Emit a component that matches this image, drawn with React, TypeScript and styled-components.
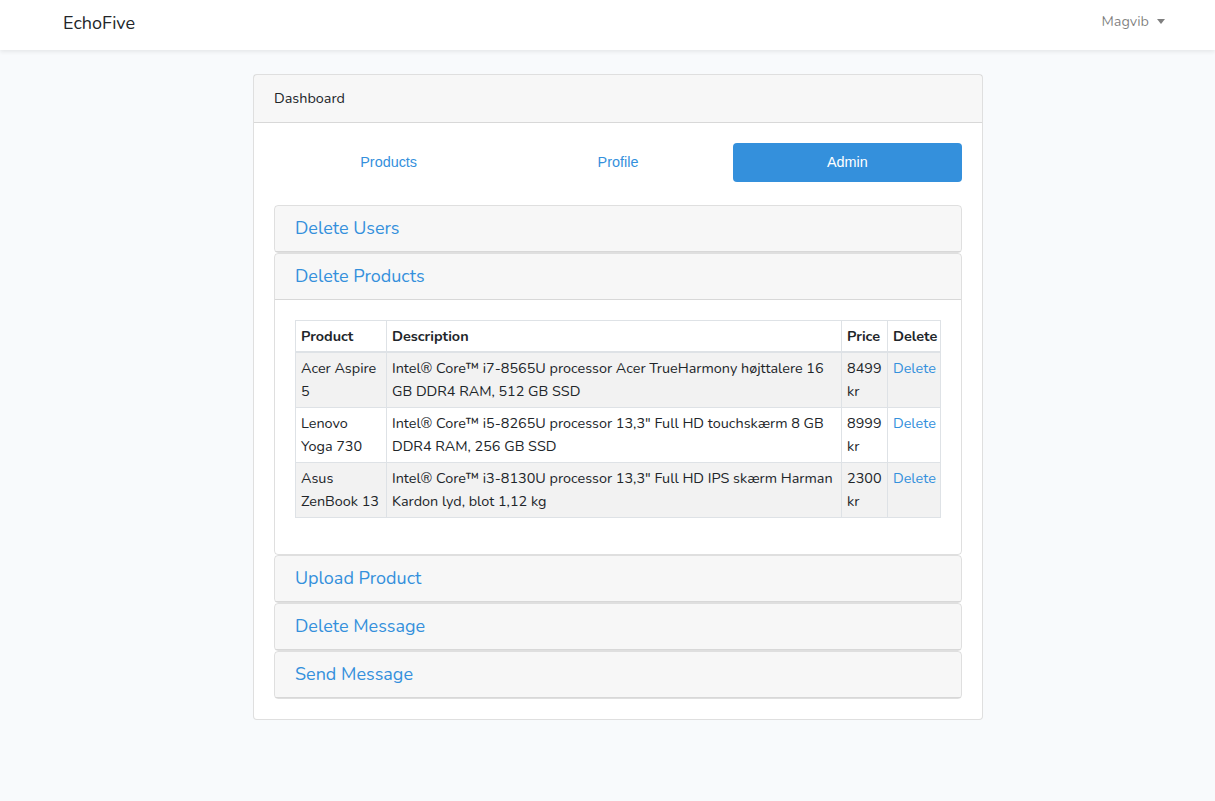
import React from "react";
import styled, { createGlobalStyle } from "styled-components";

const Global = createGlobalStyle`
  html, body { margin: 0; padding: 0; }
  body {
    background: #f8fafc;
    font-family: "Nunito", "Lato", "Noto Sans", sans-serif;
    font-size: 14.4px;
    line-height: 1.6;
    color: #212529;
  }
  * { box-sizing: border-box; }
`;

const NavBar = styled.nav`
  height: 50px;
  background: #fff;
  box-shadow: 0 2px 4px rgba(0, 0, 0, 0.075);
  display: flex;
  align-items: center;
  justify-content: space-between;
  padding: 0 50px 0 63px;
`;

const Brand = styled.a`
  font-size: 18px;
  color: #212529;
  text-decoration: none;
  margin-top: -4px;
`;

const UserMenu = styled.a`
  display: flex;
  align-items: center;
  gap: 8px;
  color: rgba(0, 0, 0, 0.5);
  font-size: 14.4px;
  margin-top: -7px;
  &::after {
    content: "";
    border-top: 5px solid rgba(0, 0, 0, 0.5);
    border-left: 4.5px solid transparent;
    border-right: 4.5px solid transparent;
    margin-top: 1px;
  }
`;

const Main = styled.main`
  display: flex;
  justify-content: center;
  padding: 24px 0 24px 21px;
`;

const Card = styled.div`
  width: 730px;
  background: #fff;
  border: 1px solid rgba(0, 0, 0, 0.125);
  border-radius: 4px;
`;

const CardHeader = styled.div`
  padding: 12px 20px;
  line-height: 23px;
  background: rgba(0, 0, 0, 0.03);
  border-bottom: 1px solid rgba(0, 0, 0, 0.125);
`;

const CardBody = styled.div`
  padding: 20px;
`;

const Pills = styled.div`
  display: grid;
  grid-template-columns: repeat(3, 1fr);
  margin-bottom: 23px;
`;

const Pill = styled.a<{ $active?: boolean }>`
  display: block;
  text-align: center;
  font-family: "Liberation Sans", Arial, sans-serif;
  font-size: 14.4px;
  line-height: 23px;
  padding: 8px 16px;
  border-radius: 4px;
  color: ${(p) => (p.$active ? "#fff" : "#3490dc")};
  background: ${(p) => (p.$active ? "#3490dc" : "transparent")};
`;

const Section = styled.div`
  border: 1px solid rgba(0, 0, 0, 0.125);
  border-radius: 4px;
  overflow: hidden;
`;

const SectionHeader = styled.div`
  padding: 12px 20px;
  background: rgba(0, 0, 0, 0.03);
  border-bottom: 1px solid rgba(0, 0, 0, 0.125);
`;

const SectionTitle = styled.h5`
  margin: 0;
  font-size: 18px;
  font-weight: 400;
  line-height: 21px;
  color: #3490dc;
`;

const SectionBody = styled.div`
  padding: 20px;
`;

const Table = styled.table`
  width: 100%;
  table-layout: fixed;
  border-collapse: collapse;
  margin-bottom: 16px;
  color: #212529;
  line-height: 23px;
`;

const Th = styled.th`
  text-align: left;
  padding: 3.5px 5px;
  border: 1px solid #dee2e6;
  border-bottom-width: 2px;
  font-weight: 700;
  vertical-align: bottom;
`;

const Tr = styled.tr<{ $striped?: boolean }>`
  background: ${(p) => (p.$striped ? "rgba(0,0,0,0.05)" : "transparent")};
`;

const Td = styled.td`
  padding: 4px 5px;
  border: 1px solid #dee2e6;
  vertical-align: top;
`;

const DeleteLink = styled.a`
  color: #3490dc;
  text-decoration: none;
`;

const products = [
  {
    name: "Acer Aspire 5",
    desc: "Intel® Core™ i7-8565U processor Acer TrueHarmony højttalere 16 GB DDR4 RAM, 512 GB SSD",
    price: "8499 kr",
  },
  {
    name: "Lenovo Yoga 730",
    desc: 'Intel® Core™ i5-8265U processor 13,3" Full HD touchskærm 8 GB DDR4 RAM, 256 GB SSD',
    price: "8999 kr",
  },
  {
    name: "Asus ZenBook 13",
    desc: 'Intel® Core™ i3-8130U processor 13,3" Full HD IPS skærm Harman Kardon lyd, blot 1,12 kg',
    price: "2300 kr",
  },
];

function Accordion({ title, children }: { title: string; children?: React.ReactNode }) {
  return (
    <Section>
      <SectionHeader>
        <SectionTitle>{title}</SectionTitle>
      </SectionHeader>
      {children && <SectionBody>{children}</SectionBody>}
    </Section>
  );
}

export default function App() {
  return (
    <>
      <Global />
      <NavBar>
        <Brand>EchoFive</Brand>
        <UserMenu>Magvib</UserMenu>
      </NavBar>
      <Main>
        <Card>
          <CardHeader>Dashboard</CardHeader>
          <CardBody>
            <Pills>
              <Pill>Products</Pill>
              <Pill>Profile</Pill>
              <Pill $active>Admin</Pill>
            </Pills>
            <Accordion title="Delete Users" />
            <Accordion title="Delete Products">
              <Table>
                <colgroup>
                  <col style={{ width: 91 }} />
                  <col style={{ width: 455 }} />
                  <col style={{ width: 46 }} />
                  <col style={{ width: 53 }} />
                </colgroup>
                <thead>
                  <tr>
                    <Th>Product</Th>
                    <Th>Description</Th>
                    <Th>Price</Th>
                    <Th>Delete</Th>
                  </tr>
                </thead>
                <tbody>
                  {products.map((p, i) => (
                    <Tr key={p.name} $striped={i % 2 === 0}>
                      <Td>{p.name}</Td>
                      <Td>{p.desc}</Td>
                      <Td>{p.price}</Td>
                      <Td>
                        <DeleteLink>Delete</DeleteLink>
                      </Td>
                    </Tr>
                  ))}
                </tbody>
              </Table>
            </Accordion>
            <Accordion title="Upload Product" />
            <Accordion title="Delete Message" />
            <Accordion title="Send Message" />
          </CardBody>
        </Card>
      </Main>
    </>
  );
}
